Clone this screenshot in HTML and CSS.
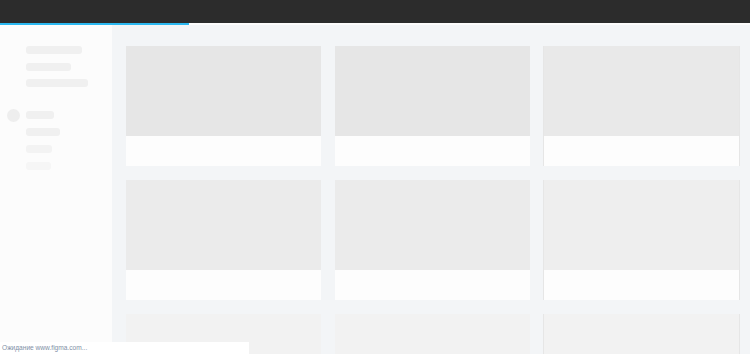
FILE: index.html
```html
<!DOCTYPE html>
<html>
<head>
<meta charset="utf-8">
<link rel="stylesheet" href="styles.css">
</head>
<body>
<div class="topbar"></div>
<div class="progress"><div class="progress-fill"></div></div>
<div class="layout">
  <aside class="sidebar">
    <div class="group">
      <div class="sk w56"></div>
      <div class="sk w45"></div>
      <div class="sk w62"></div>
    </div>
    <div class="group second">
      <div class="item"><span class="dot"></span><div class="sk w28"></div></div>
      <div class="item"><div class="sk w34"></div></div>
      <div class="item"><div class="sk w26 light"></div></div>
      <div class="item"><div class="sk w25 lighter"></div></div>
    </div>
  </aside>
  <main class="main">
    <div class="grid">
      <div class="card"><div class="thumb r1"></div><div class="foot"></div></div>
      <div class="card"><div class="thumb r1"></div><div class="foot"></div></div>
      <div class="card edge"><div class="thumb r1b"></div><div class="foot"></div></div>
      <div class="card"><div class="thumb r2"></div><div class="foot"></div></div>
      <div class="card"><div class="thumb r2"></div><div class="foot"></div></div>
      <div class="card edge"><div class="thumb r2b"></div><div class="foot"></div></div>
      <div class="card"><div class="thumb r3"></div><div class="foot"></div></div>
      <div class="card"><div class="thumb r3"></div><div class="foot"></div></div>
      <div class="card edge"><div class="thumb r3"></div><div class="foot"></div></div>
    </div>
  </main>
</div>
<div class="status">Ожидание www.figma.com...</div>
</body>
</html>
```
FILE: styles.css
```css
html, body {
  margin: 0;
  padding: 0;
  height: 100%;
  overflow: hidden;
  font-family: "Liberation Sans", Arial, sans-serif;
  background: #f3f5f7;
}
.topbar {
  height: 23px;
  background: #2c2c2c;
}
.progress {
  height: 2px;
  background: #fcfcfc;
}
.progress-fill {
  width: 189px;
  height: 2px;
  background: #2bb8f0;
}
.layout {
  display: flex;
  height: 329px;
}
.sidebar {
  width: 112px;
  flex: none;
  background: #fcfcfc;
  display: flex;
  flex-direction: column;
}
.group {
  display: flex;
  flex-direction: column;
  gap: 8.5px;
  padding: 21px 0 0 26px;
}
.group.second {
  gap: 9px;
  padding-top: 24px;
}
.item {
  position: relative;
  height: 8px;
}
.sk {
  height: 8px;
  border-radius: 3px;
  background: #f0f0f0;
}
.sk.light { background: #f3f3f3; }
.sk.lighter { background: #f6f6f6; }
.w56 { width: 56px; }
.w45 { width: 45px; }
.w62 { width: 62px; }
.w28 { width: 28px; }
.w34 { width: 34px; }
.w26 { width: 26px; }
.w25 { width: 25px; }
.dot {
  position: absolute;
  left: -19px;
  top: -2px;
  width: 13px;
  height: 13px;
  border-radius: 50%;
  background: #eeeeee;
}
.main {
  flex: 1;
  padding: 21px 11px 0 14px;
  overflow: hidden;
}
.grid {
  display: grid;
  grid-template-columns: repeat(3, 195px);
  column-gap: 14px;
  row-gap: 14px;
}
.card {
  display: flex;
  flex-direction: column;
}
.card.edge {
  box-shadow: -1px 0 0 #e6e6e6, 1px 0 0 #e6e6e6;
}
.thumb {
  height: 90px;
}
.r1 { background: #e6e6e6; }
.r1b { background: #e9e9e9; }
.r2 { background: #ebebeb; }
.r2b { background: #eeeeee; }
.r3 { background: #f2f2f2; }
.foot {
  height: 30px;
  background: #fdfdfd;
}
.status {
  position: absolute;
  left: 0;
  bottom: 0;
  width: 247px;
  height: 12px;
  padding-left: 2px;
  background: #ffffff;
  color: #8190a6;
  font-size: 6.6px;
  line-height: 12px;
  white-space: nowrap;
}
```
